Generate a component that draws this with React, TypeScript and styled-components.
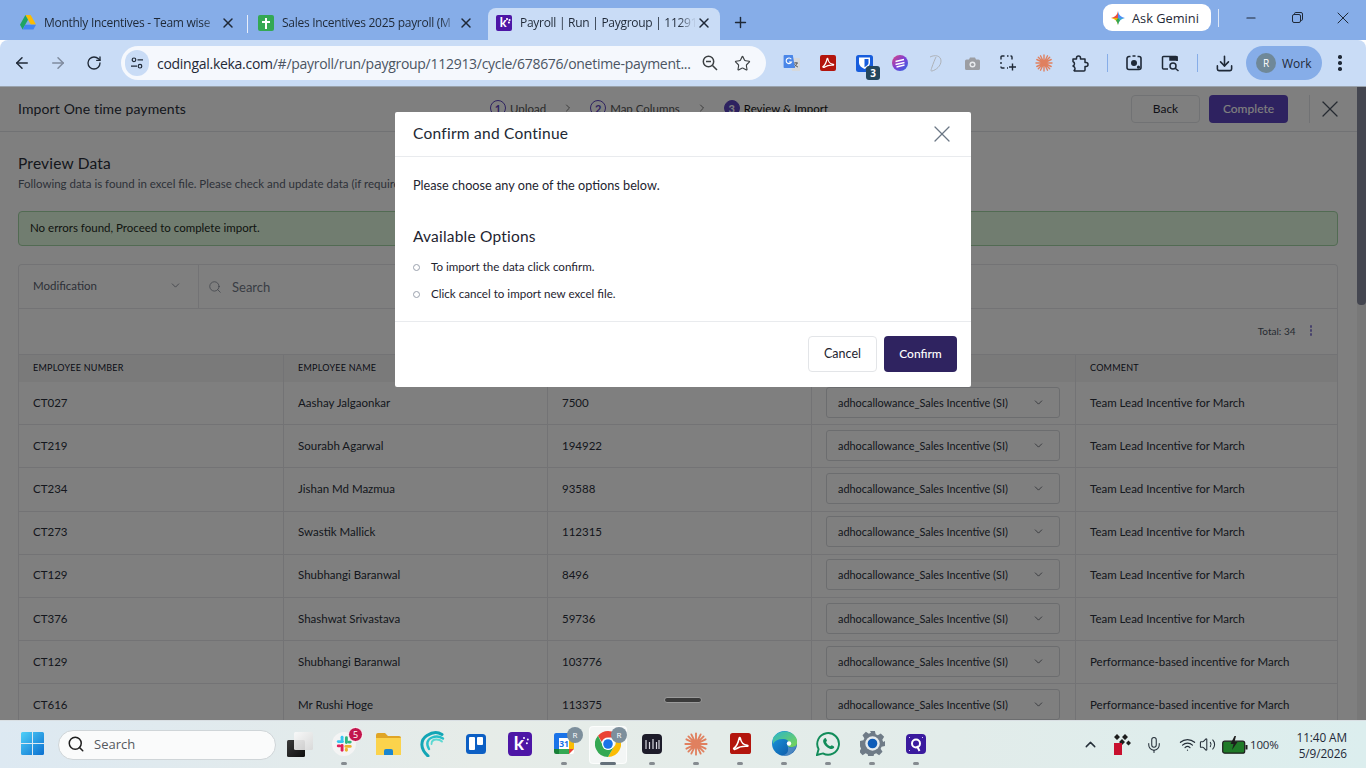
import { Fragment } from 'react';
import styled, { createGlobalStyle } from 'styled-components';
import {
  ArrowLeft,
  ArrowRight,
  RotateCw,
  Star,
  X,
  Plus,
  Minus,
  ChevronDown,
  ChevronRight,
  ChevronUp,
  Search,
  Mic,
  Wifi,
  Volume2,
  Download,
} from 'lucide-react';

const GlobalStyle = createGlobalStyle`
  html, body {
    margin: 0;
    padding: 0;
    overflow: hidden;
    background: #fff;
  }
  *, *::before, *::after { box-sizing: border-box; }
`;

const KEKA = `Lato, "Open Sans", sans-serif`;
const SYSTEM = `"Open Sans", "Noto Sans", sans-serif`;

type Row = { id: string; name: string; amount: string; comment: string };

const TEAM = 'Team Lead Incentive for March';
const PERF = 'Performance-based incentive for March';

const rows: Row[] = [
  { id: 'CT027', name: 'Aashay Jalgaonkar', amount: '7500', comment: TEAM },
  { id: 'CT219', name: 'Sourabh Agarwal', amount: '194922', comment: TEAM },
  { id: 'CT234', name: 'Jishan Md Mazmua', amount: '93588', comment: TEAM },
  { id: 'CT273', name: 'Swastik Mallick', amount: '112315', comment: TEAM },
  { id: 'CT129', name: 'Shubhangi Baranwal', amount: '8496', comment: TEAM },
  { id: 'CT376', name: 'Shashwat Srivastava', amount: '59736', comment: TEAM },
  { id: 'CT129', name: 'Shubhangi Baranwal', amount: '103776', comment: PERF },
  { id: 'CT616', name: 'Mr Rushi Hoge', amount: '113375', comment: PERF },
];

/* ---------- drawn icons ---------- */

const DriveIcon = () => (
  <svg width="16" height="15" viewBox="0 0 16 15">
    <path d="M5.4 0h5.2l5.4 9.6h-5.2z" fill="#fbbc04" />
    <path d="M5.4 0L0 9.8l2.6 4.6L8 4.8z" fill="#1fa463" />
    <path d="M5.3 9.8H16l-2.6 4.7H2.6z" fill="#4285f4" />
  </svg>
);

const SheetsIcon = () => (
  <svg width="16" height="16" viewBox="0 0 16 16">
    <rect width="16" height="16" rx="2" fill="#34a853" />
    <path d="M7 3h2v3h3v2H9v6H7V8H4V6h3z" fill="#fff" />
  </svg>
);

const GeminiIcon = () => (
  <svg width="14" height="14" viewBox="0 0 14 14">
    <path d="M7 0C6.400 3.800 4.400 6 0 7h7z" fill="#e8503f" />
    <path d="M7 0c.6 3.800 2.600 6 7 7H7z" fill="#4d8df5" />
    <path d="M14 7c-4.400 1-6.400 3.200-7 7V7z" fill="#3fa7d6" />
    <path d="M7 14c-.6-3.800-2.600-6-7-7h7z" fill="#f2b400" />
    <path d="M7 14c-.3-2-1-3.500-2-4.600L7 7l2 2.400C8 10.500 7.300 12 7 14z" fill="#34a853" />
  </svg>
);

const TuneIcon = () => (
  <svg width="14" height="14" viewBox="0 0 14 14" fill="none" stroke="#1f2937" strokeWidth="1.2">
    <circle cx="4" cy="3.800" r="1.800" />
    <path d="M7.500 3.800H13M1 10.200h6" />
    <circle cx="10" cy="10.200" r="1.800" />
  </svg>
);

const ZoomOutIcon = () => (
  <svg width="18" height="18" viewBox="0 0 18 18" fill="none" stroke="#3c4043" strokeWidth="1.500">
    <circle cx="7.500" cy="7.500" r="5.200" />
    <path d="M11.500 11.500L16 16M5 7.500h5" />
  </svg>
);

const TranslateIcon = () => (
  <svg width="18" height="18" viewBox="0 0 18 18">
    <path d="M8 4h8a1 1 0 0 1 1 1v12H9z" fill="#d5d8dc" />
    <path d="M11 9h4M13 8v1M14 9c-.4 2-1.500 3.200-3 4M11.500 10c.6 1.400 1.800 2.500 3.500 3" stroke="#555" strokeWidth="0.900" fill="none" />
    <path d="M1.500 1h8.300L12 14H1.500A.9.900 0 0 1 .6 13V2A1 1 0 0 1 1.500 1z" fill="#4a86e8" />
    <path d="M8.300 5.200A2.800 2.800 0 1 0 8.500 8H6" stroke="#fff" strokeWidth="1.100" fill="none" />
  </svg>
);

const PdfIcon = ({ size = 16 }: { size?: number }) => (
  <svg width={size} height={size} viewBox="0 0 16 16">
    <rect width="16" height="16" rx="2" fill="#b3150d" />
    <path
      d="M2.800 11.800c1.600-1 3.500-4.600 4.200-7.800.2-.8.800-.7.900 0 .4 2.600 2.300 5 5.300 5.300.7.100.6.900-.1.800-3-.2-6.400.5-8.300 1.900-1 .8-2 .5-2-.2z"
      fill="none"
      stroke="#fff"
      strokeWidth="1.200"
    />
  </svg>
);

const ShieldIcon = () => (
  <svg width="17" height="17" viewBox="0 0 17 17">
    <rect width="17" height="17" rx="2.500" fill="#175ddc" />
    <path d="M3 2.500h11v5.500c0 2.500-2.500 4.500-5.500 6C5.500 12.500 3 10.500 3 8z" fill="#fff" />
    <path d="M8.500 4H12.500v4c0 1.600-1.800 3-4 4.200z" fill="#175ddc" />
  </svg>
);

const SwirlIcon = () => (
  <svg width="16" height="16" viewBox="0 0 16 16">
    <defs>
      <linearGradient id="swirl" x1="0" y1="0" x2="1" y2="1">
        <stop offset="0" stopColor="#e0457b" />
        <stop offset="0.5" stopColor="#7c3fd6" />
        <stop offset="1" stopColor="#2c6be0" />
      </linearGradient>
    </defs>
    <circle cx="8" cy="8" r="8" fill="url(#swirl)" />
    <path d="M3.500 6.500L12 4.500M3.500 9.500L12.500 7.500M4.500 12L12.500 10" stroke="#fff" strokeWidth="1.300" />
  </svg>
);

const ScriptIcon = () => (
  <svg width="18" height="18" viewBox="0 0 18 18" fill="none" stroke="#aeb2b8" strokeWidth="1">
    <path d="M3 3c5-2.500 11-1.500 11 4 0 5-5 9-9 10-1.500.3-1-1 0-4 1-3 3-8 4-10" />
  </svg>
);

const CameraIcon = () => (
  <svg width="15" height="13" viewBox="0 0 15 13">
    <path d="M1.500 2.500H4L5 .5h5l1 2h2.500A1.500 1.500 0 0 1 15 4v7.500a1.500 1.500 0 0 1-1.500 1.500h-12A1.500 1.500 0 0 1 0 11.500V4a1.500 1.500 0 0 1 1.500-1.500z" fill="#9c9ea3" />
    <circle cx="7.500" cy="7.500" r="3" fill="#e9ebee" />
    <circle cx="7.500" cy="7.500" r="1.600" fill="#9c9ea3" />
  </svg>
);

const CaptureIcon = () => (
  <svg width="16" height="16" viewBox="0 0 16 16" fill="none" stroke="#1f2937" strokeWidth="1.400">
    <path d="M1 4.500V2a1 1 0 0 1 1-1h2.500M7 1h1.500M12 4.500V2a1 1 0 0 0-1-1h-.5M1 7v2M1 11.500V12a1 1 0 0 0 1 1h2.500M7 13h1M12.500 8.500v7M9 12h7" />
  </svg>
);

const ClaudeIcon = ({ size = 18 }: { size?: number }) => (
  <svg width={size} height={size} viewBox="0 0 18 18" stroke="#e0805f" strokeWidth="1.400" strokeLinecap="round">
    <path d="M9 1v16M1 9h16M3.300 3.300l11.400 11.400M14.700 3.300L3.300 14.700M5.500 1.800l7 14.400M12.500 1.800l-7 14.400M1.800 5.500l14.400 7M16.200 5.500l-14.400 7" />
    <circle cx="9" cy="9" r="2.400" fill="#e0805f" stroke="none" />
  </svg>
);

const ExtensionIcon = () => (
  <svg width="17" height="17" viewBox="0 0 17 17" fill="none" stroke="#1f2937" strokeWidth="1.500" strokeLinejoin="round">
    <path d="M1 4h3.500V3a2 2 0 0 1 4 0v1H13v3.500h1a2 2 0 0 1 0 4h-1V15a1 1 0 0 1-1 1H2.500l-.5-.5c1.500-1 1.500-3.500-1-4.500 2-1 2-3.500 0-4.500z" />
  </svg>
);

const LensIcon = () => (
  <svg width="18" height="18" viewBox="0 0 18 18" fill="none" stroke="#1f2937" strokeWidth="1.600">
    <path d="M5.500 2.500H4A2 2 0 0 0 2 4.500v9a2 2 0 0 0 2 2h10a2 2 0 0 0 2-2v-9a2 2 0 0 0-2-2h-1.500M7.500 2h3" />
    <circle cx="9" cy="9" r="2.200" fill="#1f2937" />
    <circle cx="13.500" cy="13.200" r="0.800" fill="#1f2937" />
  </svg>
);

const SidePanelIcon = () => (
  <svg width="19" height="18" viewBox="0 0 19 18" fill="none" stroke="#1f2937" strokeWidth="1.500">
    <path d="M7 15H2.500A1 1 0 0 1 1.500 14V3.500a1 1 0 0 1 1-1H15a1 1 0 0 1 1 1V7" />
    <path d="M9 3h7v3H9z" fill="#1f2937" />
    <circle cx="12" cy="12" r="3" />
    <path d="M14.200 14.200L17.500 17" />
  </svg>
);

const RestoreIcon = () => (
  <svg width="11" height="11" viewBox="0 0 11 11" fill="none" stroke="#1f2937" strokeWidth="1">
    <rect x="0.500" y="2.500" width="8" height="8" rx="1.500" />
    <path d="M2.500 1.800A1.300 1.300 0 0 1 3.800.5h5.200a1.500 1.500 0 0 1 1.500 1.500v5.200a1.300 1.300 0 0 1-1.300 1.300" />
  </svg>
);

const WindowsIcon = () => (
  <svg width="23" height="23" viewBox="0 0 23 23">
    <defs>
      <linearGradient id="win" x1="0" y1="0" x2="1" y2="1">
        <stop offset="0" stopColor="#4fd0f8" />
        <stop offset="1" stopColor="#0b6fd0" />
      </linearGradient>
    </defs>
    <path d="M0 1.500A1.500 1.500 0 0 1 1.500 0H11v11H0zM12 0h9.500A1.500 1.500 0 0 1 23 1.500V11H12zM0 12h11v11H1.500A1.500 1.500 0 0 1 0 21.500zM12 12h11v9.500a1.500 1.500 0 0 1-1.500 1.500H12z" fill="url(#win)" />
  </svg>
);

const TaskViewIcon = () => (
  <svg width="26" height="26" viewBox="0 0 26 26">
    <defs>
      <linearGradient id="tvBack" x1="0" y1="0" x2="1" y2="1">
        <stop offset="0" stopColor="#3a3a3a" />
        <stop offset="1" stopColor="#0f0f0f" />
      </linearGradient>
      <linearGradient id="tvFront" x1="0" y1="0" x2="1" y2="1">
        <stop offset="0" stopColor="#fafafa" />
        <stop offset="1" stopColor="#d8d8d8" />
      </linearGradient>
    </defs>
    <rect x="0" y="9" width="18" height="17" rx="1.500" fill="url(#tvBack)" />
    <rect x="7" y="1" width="19" height="18" rx="1.500" fill="url(#tvFront)" opacity="0.92" />
  </svg>
);

const SlackIcon = () => (
  <svg width="24" height="24" viewBox="0 0 25 25">
    <circle cx="12.500" cy="12.500" r="12.500" fill="#f4f4f4" />
    <g strokeWidth="3" strokeLinecap="round" fill="none">
      <path d="M6.500 10H11" stroke="#36c5f0" />
      <path d="M10.500 5.500V8" stroke="#36c5f0" />
      <path d="M15 6v5" stroke="#2eb67d" />
      <path d="M19 10.500h-1.500" stroke="#2eb67d" />
      <path d="M14.500 15H19" stroke="#ecb22e" />
      <path d="M15 19v-1" stroke="#ecb22e" />
      <path d="M10.500 14v5" stroke="#e01e5a" />
      <path d="M6.500 14.500H8" stroke="#e01e5a" />
    </g>
  </svg>
);

const FolderIcon = () => (
  <svg width="25" height="22" viewBox="0 0 25 22">
    <path d="M0 2a2 2 0 0 1 2-2h7l3 3h11a2 2 0 0 1 2 2v4H0z" fill="#e0a526" />
    <path d="M0 5h25v17H0z" fill="#fbd34c" />
    <path d="M8 18a2 2 0 0 1 2-2h5a2 2 0 0 1 2 2v4H8z" fill="#1a86d0" />
  </svg>
);

const WaveIcon = () => (
  <svg width="25" height="26" viewBox="0 0 25 26" fill="none" strokeLinecap="round">
    <path d="M8 25C0 18 0 9 7 4.500s11-3.500 15-1" stroke="#12a5b5" strokeWidth="3" />
    <path d="M9 18C6 13 7 8.500 12 6.500s8-1 11 1" stroke="#27bfc8" strokeWidth="2.400" />
    <path d="M11.500 13c0-3 2-4.500 5-4.500s4 .5 5.500 2" stroke="#5cd8d2" strokeWidth="1.800" />
  </svg>
);

const TrelloIcon = () => (
  <svg width="20" height="20" viewBox="0 0 20 20">
    <rect width="20" height="20" rx="3.500" fill="#0c5fc4" />
    <rect x="3" y="3" width="6" height="13" rx="1" fill="#fff" />
    <rect x="11" y="3" width="6" height="8" rx="1" fill="#fff" />
  </svg>
);

const CalendarIcon = () => (
  <svg width="20" height="21" viewBox="0 0 20 21">
    <rect width="20" height="21" rx="2" fill="#fff" />
    <path d="M2 0h13v5H5v11H0V2a2 2 0 0 1 2-2z" fill="#1a73e8" />
    <path d="M15 5h5v11h-5z" fill="#fbbc04" />
    <path d="M5 16h10v5H5z" fill="#34a853" />
    <path d="M0 16h5v5H2a2 2 0 0 1-2-2z" fill="#188038" />
    <path d="M15 16h5l-5 5z" fill="#ea4335" />
    <text x="10" y="14" textAnchor="middle" fontSize="8.500" fontWeight="700" fontFamily="'Open Sans', sans-serif" fill="#1a73e8">
      31
    </text>
  </svg>
);

const ChromeIcon = () => (
  <svg width="26" height="26" viewBox="0 0 26 26">
    <path d="M13 0a13 13 0 0 1 11.300 6.500H13a6.500 6.500 0 0 0-6.200 4.500L3 4.700A13 13 0 0 1 13 0z" fill="#ea4335" />
    <path d="M24.300 6.500A13 13 0 0 1 13 26l5.600-9.700a6.500 6.500 0 0 0 0-9.800z" fill="#fbbc04" />
    <path d="M13 26A13 13 0 0 1 3 4.700l5.600 11.600a6.500 6.500 0 0 0 10 0L13 26z" fill="#34a853" />
    <circle cx="13" cy="13" r="6" fill="#fff" />
    <circle cx="13" cy="13" r="4.800" fill="#1a73e8" />
  </svg>
);

const BarsIcon = () => (
  <svg width="20" height="20" viewBox="0 0 20 20">
    <rect width="20" height="20" rx="4" fill="#1d1c2a" />
    <path d="M4 6v9M7.500 8v7M11 5v10M14.500 8v7M17 6v9" stroke="#d8d8e0" strokeWidth="1.200" />
  </svg>
);

const EdgeIcon = () => (
  <svg width="25" height="25" viewBox="0 0 25 25">
    <defs>
      <linearGradient id="edgeA" x1="0" y1="0" x2="1" y2="1">
        <stop offset="0" stopColor="#2cb5c9" />
        <stop offset="1" stopColor="#7bd651" />
      </linearGradient>
      <linearGradient id="edgeB" x1="0" y1="0" x2="1" y2="1">
        <stop offset="0" stopColor="#1b9de2" />
        <stop offset="1" stopColor="#0c4f9e" />
      </linearGradient>
    </defs>
    <circle cx="12.500" cy="12.500" r="12.500" fill="url(#edgeB)" />
    <path d="M1 7C5 0 15-1.500 21 3c4 3 5 8 3.500 11-2 2.500-8 3-9 .5 3-1.500 1.500-6-3.500-6.500C7.500 7.500 3 9 1 13z" fill="url(#edgeA)" />
    <path d="M15.500 14.500c1 3 6 2.500 9-.5-1 6-6 11-12 11-1.500 0-3-.5-3.500-1 4 1 9-2 6.500-9.500z" fill="#ffffff" opacity="0.25" />
    <circle cx="17" cy="12.500" r="2.200" fill="#fff" />
  </svg>
);

const WhatsappIcon = () => (
  <svg width="24" height="24" viewBox="0 0 25 25">
    <path d="M1 24l1.700-6.200A11.300 11.300 0 1 1 7.200 22.300z" fill="none" stroke="#128c5a" strokeWidth="2" />
    <path d="M8.500 7c1-1 1.800-.8 2.200.2l.7 1.700c.1.500-.8 1.300-.9 1.800 1 2 2.300 3.300 4.200 4.200.6-.1 1.300-1.100 1.800-1l1.900.9c.8.500.8 1.200-.1 2.200-1.500 1.300-3.400 1-6-.6-2.400-1.500-4-3.500-4.700-5.600C7.300 9.200 7.500 8 8.500 7z" fill="#128c5a" />
  </svg>
);

const GearIcon = () => (
  <svg width="25" height="25" viewBox="0 0 26 26">
    <path d="M10.500 0h5l.8 3.500 2.200 1 3.100-1.900 3.500 3.500-1.900 3.100.9 2.200L26 10.500v5l-3.600.8-.9 2.200 1.900 3.100-3.500 3.500-3.100-1.900-2.200.9-.8 3.400h-5l-.8-3.400-2.200-.9-3.100 1.900-3.500-3.500 1.900-3.100-.9-2.200L0 15.500v-5l3.600-.8.900-2.200-1.900-3.100 3.500-3.500 3.100 1.900 2.200-1z" fill="#6f7b87" />
    <circle cx="13" cy="13" r="7.500" fill="#e6ebee" />
    <circle cx="13" cy="13" r="5" fill="#0f5cb8" />
  </svg>
);

const QuillIcon = () => (
  <svg width="20" height="20" viewBox="0 0 20 20">
    <rect width="20" height="20" rx="4" fill="#3a1a9e" />
    <circle cx="10" cy="9.500" r="4" fill="none" stroke="#fff" strokeWidth="2" />
    <path d="M11 12l2.500 5" stroke="#fff" strokeWidth="2" />
    <path d="M3 3l1 1M16 3l1 1M3 16l1 1" stroke="#e0c8ff" strokeWidth="1" />
  </svg>
);

const TrayDropIcon = () => (
  <svg width="17" height="21" viewBox="0 0 17 21">
    <path d="M0 3l3-3 3 3-3 3zM8 3l3-3 3 3-3 3zM5 8l3-3 3 3-3 3zM12 9l2.500-2.500L17 9l-2.500 2.500z" fill="#1d1d1d" />
    <rect x="0" y="9" width="8" height="12" fill="#c8102e" />
  </svg>
);

const BatteryIcon = () => (
  <svg width="26" height="18" viewBox="0 0 26 18">
    <rect x="0.700" y="5.200" width="22" height="12" rx="2" fill="#1f7a28" stroke="#1d1d1d" strokeWidth="1.200" />
    <rect x="23.500" y="9" width="2" height="4.500" fill="#1d1d1d" />
    <path d="M12.500 0L8.500 8h3l-1.500 6 5.500-8h-3l1.500-6z" fill="#1d1d1d" />
  </svg>
);

/* ---------- browser tabs ---------- */

const TabStrip = styled.div`
  height: 40px;
  background: #86ade8;
  display: flex;
  align-items: flex-end;
  padding-left: 12px;
  font-family: ${SYSTEM};
`;

const Tab = styled.div<{ $active?: boolean }>`
  width: 232px;
  height: 32px;
  display: flex;
  align-items: center;
  padding: 0 8px 3px;
  border-radius: 8px 8px 0 0;
  background: ${(p) => (p.$active ? '#c9dcf6' : 'transparent')};
  color: #1f2937;
`;

const TabFavicon = styled.span`
  width: 16px;
  height: 16px;
  flex: none;
  display: flex;
  align-items: center;
  justify-content: center;
  margin-right: 8px;
`;

const KekaTile = styled.span<{ $size: number }>`
  position: relative;
  width: ${(p) => p.$size}px;
  height: ${(p) => p.$size}px;
  flex: none;
  border-radius: ${(p) => (p.$size > 16 ? 4 : 2)}px;
  background: #4d16a6;
  color: #fff;
  display: flex;
  align-items: center;
  padding-left: ${(p) => p.$size * 0.24}px;
  padding-bottom: ${(p) => p.$size * 0.06}px;
  font: 700 ${(p) => p.$size * 0.8}px/1 ${KEKA};
  &::after {
    content: '';
    position: absolute;
    top: ${(p) => p.$size * 0.22}px;
    left: ${(p) => p.$size * 0.62}px;
    width: ${(p) => p.$size * 0.1}px;
    height: ${(p) => p.$size * 0.1}px;
    border-radius: 50%;
    background: #fff;
    box-shadow:
      ${(p) => p.$size * 0.16}px ${(p) => p.$size * 0.06}px 0 #fff,
      ${(p) => p.$size * 0.12}px ${(p) => p.$size * 0.22}px 0 #fff;
  }
`;

const TabTitle = styled.span`
  flex: 1;
  min-width: 0;
  font-size: 12px;
  letter-spacing: -0.28px;
  white-space: nowrap;
  overflow: hidden;
  mask-image: linear-gradient(90deg, #000 90%, transparent);
`;

const TabClose = styled.span`
  width: 16px;
  height: 16px;
  flex: none;
  display: flex;
  align-items: center;
  justify-content: center;
  color: #1f2937;
`;

const TabSeparator = styled.span<{ $hidden?: boolean }>`
  width: 1px;
  height: 18px;
  background: ${(p) => (p.$hidden ? 'transparent' : '#e8eefa')};
  margin: 0 2px 7px 3px;
`;

const NewTab = styled.span`
  width: 28px;
  height: 28px;
  margin: 0 0 4px 6px;
  display: flex;
  align-items: center;
  justify-content: center;
  color: #1f2937;
`;

const StripRight = styled.div`
  margin-left: auto;
  height: 40px;
  display: flex;
  align-items: center;
`;

const GeminiPill = styled.div`
  width: 108px;
  height: 27px;
  margin-top: -5px;
  border-radius: 9px;
  background: #fff;
  display: flex;
  align-items: center;
  gap: 7px;
  padding-left: 8px;
  font-size: 12.800px;
  font-weight: 500;
  color: #1f2937;
`;

const StripDivider = styled.span`
  width: 1px;
  height: 18px;
  margin: -5px 9px 0 7px;
  background: #dce7f8;
`;

const WindowButton = styled.span`
  width: 46px;
  height: 32px;
  margin-top: -5px;
  display: flex;
  align-items: center;
  justify-content: center;
  color: #1f2937;
`;

/* ---------- browser toolbar ---------- */

const Toolbar = styled.div`
  height: 47px;
  background: #c9dcf6;
  border-bottom: 1px solid #9aa3ad;
  border-radius: 8px 8px 0 0;
  display: flex;
  align-items: center;
  padding-left: 4px;
  font-family: ${SYSTEM};
`;

const ToolButton = styled.span<{ $dim?: boolean }>`
  position: relative;
  width: 36px;
  height: 34px;
  flex: none;
  display: flex;
  align-items: center;
  justify-content: center;
  color: ${(p) => (p.$dim ? '#7f8b9e' : '#1f2937')};
`;

const Omnibox = styled.div`
  width: 645px;
  height: 34px;
  margin: 0 8px 0 9px;
  border-radius: 17px;
  background: #f5f8fd;
  display: flex;
  align-items: center;
  padding: 0 6px 0 4px;
  font-size: 14px;
  letter-spacing: -0.28px;
`;

const SiteChip = styled.span`
  width: 24px;
  height: 26px;
  border-radius: 13px;
  background: #c9dcf6;
  display: flex;
  align-items: center;
  justify-content: center;
  margin-right: 8px;
`;

const UrlText = styled.span`
  width: 537px;
  white-space: nowrap;
  color: #4b5563;
`;

const UrlHost = styled.span`
  color: #1f2937;
`;

const OmniAction = styled.span`
  width: 32px;
  flex: none;
  display: flex;
  justify-content: center;
  color: #3c4043;
`;

const ExtBadge = styled.span`
  position: absolute;
  right: 2px;
  bottom: 0;
  width: 14px;
  height: 14px;
  border-radius: 3px;
  background: #24475d;
  color: #fff;
  font: 700 10px/14px ${SYSTEM};
  text-align: center;
`;

const ToolDivider = styled.span`
  width: 1px;
  height: 18px;
  flex: none;
  margin: 0 8.500px;
  background: #86ade8;
`;

const ProfilePill = styled.div`
  width: 76px;
  height: 34px;
  flex: none;
  margin-left: 4px;
  border-radius: 17px;
  background: #86ade8;
  display: flex;
  align-items: center;
  gap: 6px;
  padding-left: 10px;
  font-size: 12px;
  color: #1f2937;
`;

const Avatar = styled.span`
  width: 20px;
  height: 20px;
  border-radius: 50%;
  background: #6f8898;
  color: #fff;
  font-size: 10px;
  display: flex;
  align-items: center;
  justify-content: center;
`;

const Kebab = styled.span<{ $color: string; $dot: number; $gap: number }>`
  display: flex;
  flex-direction: column;
  gap: ${(p) => p.$gap}px;
  & > i {
    display: block;
    width: ${(p) => p.$dot}px;
    height: ${(p) => p.$dot}px;
    border-radius: 50%;
    background: ${(p) => p.$color};
  }
`;

/* ---------- keka page ---------- */

const Viewport = styled.div`
  position: relative;
  height: 633px;
  overflow: hidden;
  display: flex;
  background: #fff;
  font-family: ${KEKA};
  color: #2a2f3a;
`;

const PageColumn = styled.div`
  width: 1357px;
  flex: none;
`;

const ScrollTrack = styled.div`
  width: 9px;
  flex: none;
  background: #f1f1f1;
`;

const ScrollThumb = styled.div`
  width: 100%;
  height: 218px;
  border-radius: 0 0 4px 4px;
  background: #888ca0;
`;

const PageHeader = styled.header`
  height: 45px;
  display: flex;
  align-items: center;
  padding-left: 18px;
  border-bottom: 1px solid #e3e5e8;
`;

const PageTitle = styled.h1`
  width: 472px;
  flex: none;
  margin: -2px 0 0;
  font-size: 14px;
  font-weight: 400;
  letter-spacing: 0.12px;
`;

const Stepper = styled.div`
  display: flex;
  align-items: center;
  margin-top: -2px;
  font-size: 11.500px;
`;

const StepDot = styled.span<{ $current?: boolean }>`
  width: 16px;
  height: 16px;
  border-radius: 50%;
  border: 1px solid #5c44c0;
  background: ${(p) => (p.$current ? '#5c44c0' : 'transparent')};
  color: ${(p) => (p.$current ? '#fff' : '#5c44c0')};
  display: flex;
  align-items: center;
  justify-content: center;
  font-size: 11px;
  font-weight: 700;
  margin-right: 4px;
`;

const StepLabel = styled.span<{ $current?: boolean }>`
  color: ${(p) => (p.$current ? '#111' : '#555')};
  white-space: nowrap;
`;

const StepArrow = styled.span`
  width: 44px;
  display: flex;
  justify-content: center;
  color: #777;
`;

const HeaderActions = styled.div`
  margin-left: auto;
  display: flex;
  align-items: center;
  gap: 9px;
`;

const GhostButton = styled.button<{ $w: number; $h: number; $fs: number }>`
  width: ${(p) => p.$w}px;
  height: ${(p) => p.$h}px;
  padding: 0 0 1px;
  border: 1px solid #e3e5e8;
  border-radius: 4px;
  background: #fff;
  color: #1e2430;
  font: 400 ${(p) => p.$fs}px ${KEKA};
`;

const PrimaryButton = styled.button<{ $w: number; $h: number; $bg: string }>`
  width: ${(p) => p.$w}px;
  height: ${(p) => p.$h}px;
  padding: 0 0 1px;
  border: 0;
  border-radius: 4px;
  background: ${(p) => p.$bg};
  color: #fff;
  font: 500 12px ${KEKA};
`;

const HeaderDivider = styled.span`
  width: 1px;
  height: 28px;
  margin: 0 0 0 12px;
  background: #e3e5e8;
`;

const HeaderClose = styled.span`
  width: 28px;
  margin: 0 13px 0 -3px;
  display: flex;
  justify-content: center;
  color: #4b5563;
`;

const Content = styled.main`
  padding: 21px 18px 0;
`;

const SectionTitle = styled.h2`
  margin: 0;
  font-size: 15.500px;
  line-height: 20px;
  font-weight: 400;
  letter-spacing: 0.2px;
`;

const SectionHint = styled.p`
  margin: 3px 0 0;
  font-size: 11.500px;
  line-height: 16px;
  color: #5b6472;
  white-space: nowrap;
`;

const SuccessAlert = styled.div`
  height: 35px;
  margin: 19px 1px 0 0;
  padding: 0 0 3px 11px;
  display: flex;
  align-items: center;
  border: 1px solid #a5d6a7;
  border-radius: 4px;
  background: #e3fae0;
  font-size: 11.500px;
  color: #1e2b1e;
`;

const TableCard = styled.section`
  margin: 18px 1px 0 0;
  border: 1px solid #e6e7ea;
  border-bottom: 0;
  border-radius: 4px 4px 0 0;
`;

const FilterRow = styled.div`
  height: 44px;
  display: flex;
  align-items: center;
  border-bottom: 1px solid #e6e7ea;
`;

const FilterSelect = styled.div`
  width: 180px;
  height: 100%;
  display: flex;
  align-items: center;
  justify-content: space-between;
  padding: 0 16px 2px 14px;
  border-right: 1px solid #e6e7ea;
  font-size: 11.500px;
  color: #5a5f70;
`;

const SearchField = styled.div`
  display: flex;
  align-items: center;
  gap: 10px;
  padding-left: 9px;
  font-size: 13px;
  color: #737a88;
`;

const TotalRow = styled.div`
  height: 45px;
  display: flex;
  align-items: center;
  justify-content: flex-end;
  gap: 14px;
  padding: 0 25px 2px 0;
  font-size: 10px;
  color: #4b5563;
`;

const TableGrid = styled.div`
  display: grid;
  grid-template-columns: 264px 264px 264px 264px 1fr;
  grid-auto-rows: 43.2px;
`;

const HeadRow = styled(TableGrid)`
  grid-auto-rows: 27px;
  background: #f4f4f4;
  border-top: 1px solid #e6e7ea;
`;

const HeadCell = styled.div`
  display: flex;
  align-items: center;
  padding: 0 0 3px 14px;
  border-left: 1px solid #e6e7ea;
  font-size: 9px;
  letter-spacing: 0.25px;
  color: #16202e;
  &:first-child {
    border-left: 0;
  }
`;

const Cell = styled.div`
  display: flex;
  align-items: center;
  padding: 0 0 2px 14px;
  border-left: 1px solid #e6e7ea;
  border-bottom: 1px solid #e6e7ea;
  font-size: 11.500px;
  white-space: nowrap;
  &:nth-child(5n + 1) {
    border-left: 0;
  }
`;

const PaySelect = styled.div`
  width: 234px;
  height: 31px;
  display: flex;
  align-items: center;
  justify-content: space-between;
  padding: 0 14px 0 11px;
  border: 1px solid #d8dade;
  border-radius: 3px;
  font-size: 10.900px;
`;

/* ---------- dialog ---------- */

const Backdrop = styled.div`
  position: absolute;
  inset: 0;
  background: rgba(0, 0, 0, 0.5);
`;

const Dialog = styled.div`
  position: absolute;
  top: 25px;
  left: 395px;
  width: 576px;
  height: 275px;
  border-radius: 2px;
  background: #fff;
  color: #1e2430;
`;

const DialogHead = styled.div`
  height: 45px;
  padding: 0 15px 0 18px;
  display: flex;
  align-items: center;
  justify-content: space-between;
  border-bottom: 1px solid #e9ebee;
  font-size: 15.500px;
  letter-spacing: 0.25px;
  color: #222833;
`;

const DialogTitle = styled.span`
  margin-top: -2px;
`;

const DialogClose = styled.span`
  display: flex;
  color: #6b7785;
`;

const DialogBody = styled.div`
  height: 165px;
  padding: 20px 18px 0;
  border-bottom: 1px solid #e9ebee;
`;

const DialogLead = styled.p`
  margin: 0;
  font-size: 12.700px;
  line-height: 16px;
`;

const OptionsTitle = styled.h3`
  margin: 33px 0 0;
  font-size: 15.500px;
  line-height: 20px;
  font-weight: 400;
  letter-spacing: 0.2px;
`;

const OptionList = styled.ul`
  margin: 12px 0 0;
  padding: 0;
  list-style: none;
  display: flex;
  flex-direction: column;
  gap: 11px;
`;

const OptionItem = styled.li`
  height: 16px;
  display: flex;
  align-items: center;
  gap: 11px;
  font-size: 11.600px;
  &::before {
    content: '';
    width: 7px;
    height: 7px;
    margin-top: 2px;
    border: 1px solid #9aa1ad;
    border-radius: 50%;
  }
`;

const DialogFoot = styled.div`
  height: 65px;
  padding: 0 14px 2px 0;
  display: flex;
  align-items: center;
  justify-content: flex-end;
  gap: 7px;
`;

const ScrollHandle = styled.div`
  position: absolute;
  top: 610px;
  left: 664px;
  width: 38px;
  height: 6px;
  border-radius: 3px;
  background: #3a3a3a;
  border: 1px solid #9a9a9a;
`;

/* ---------- taskbar ---------- */

const Taskbar = styled.footer`
  height: 48px;
  display: flex;
  align-items: center;
  padding-left: 10px;
  background: linear-gradient(90deg, #dde9f2 0%, #e6ece8 35%, #e2ecea 70%, #dceeee 100%);
  border-top: 1px solid #d9dfe3;
  font-family: ${SYSTEM};
  color: #1f2937;
`;

const TaskSlot = styled.div<{ $active?: boolean }>`
  position: relative;
  width: 44px;
  height: 46px;
  flex: none;
  display: flex;
  align-items: center;
  justify-content: center;
  padding-bottom: 2px;
  &::before {
    content: '';
    display: ${(p) => (p.$active ? 'block' : 'none')};
    position: absolute;
    inset: 4px 3px 4px 3px;
    border-radius: 4px;
    background: rgba(255, 255, 255, 0.55);
    border: 1px solid rgba(255, 255, 255, 0.7);
  }
  & > * {
    position: relative;
  }
`;

const TaskSearch = styled.div`
  width: 218px;
  height: 30px;
  flex: none;
  margin: 0 2px 0 4px;
  padding: 0 0 1px 8px;
  border-radius: 15px;
  border: 1px solid #cfd5d8;
  background: #fafbfb;
  display: flex;
  align-items: center;
  gap: 9px;
  font-size: 13px;
  color: #55595e;
`;

const RunDot = styled.span<{ $wide?: boolean }>`
  position: absolute !important;
  left: 50%;
  bottom: 3px;
  width: ${(p) => (p.$wide ? 16 : 6)}px;
  height: 3px;
  transform: translateX(-50%);
  border-radius: 2px;
  background: ${(p) => (p.$wide ? '#64707a' : '#858b90')};
`;

const CountBadge = styled.span`
  position: absolute !important;
  top: 5px;
  right: 3px;
  width: 15px;
  height: 15px;
  border-radius: 50%;
  border: 1px solid #fff;
  background: #c2164d;
  color: #fff;
  font-size: 9px;
  line-height: 13px;
  text-align: center;
`;

const UserBadge = styled.span`
  position: absolute !important;
  top: 5px;
  right: 3px;
  width: 16px;
  height: 16px;
  border-radius: 50%;
  background: #7d8f9c;
  color: #fff;
  font-size: 8px;
  line-height: 16px;
  text-align: center;
`;

const Tray = styled.div`
  margin-left: auto;
  height: 100%;
  display: flex;
  align-items: center;
  padding-right: 19px;
`;

const TraySlot = styled.span<{ $w: number }>`
  width: ${(p) => p.$w}px;
  flex: none;
  display: flex;
  justify-content: center;
  color: #26303a;
`;

const BatteryText = styled.span`
  width: 30px;
  margin: 0 15px 0 2px;
  font-size: 11.500px;
  letter-spacing: -0.2px;
`;

const Clock = styled.div`
  width: 52px;
  text-align: right;
  font-size: 11.800px;
  line-height: 16px;
  letter-spacing: -0.1px;
`;

const Shell = styled.div`
  width: 1366px;
  height: 768px;
  overflow: hidden;
  display: flex;
  flex-direction: column;
`;

const Dots = ({ color, dot, gap }: { color: string; dot: number; gap: number }) => (
  <Kebab $color={color} $dot={dot} $gap={gap}>
    <i />
    <i />
    <i />
  </Kebab>
);

const App = () => {
  return (
    <Shell>
      <GlobalStyle />
      <TabStrip>
        <Tab>
          <TabFavicon>
            <DriveIcon />
          </TabFavicon>
          <TabTitle>Monthly Incentives - Team wise</TabTitle>
          <TabClose>
            <X size={16} strokeWidth={2.2} />
          </TabClose>
        </Tab>
        <TabSeparator />
        <Tab>
          <TabFavicon>
            <SheetsIcon />
          </TabFavicon>
          <TabTitle>Sales Incentives 2025 payroll (M</TabTitle>
          <TabClose>
            <X size={16} strokeWidth={2.2} />
          </TabClose>
        </Tab>
        <TabSeparator $hidden />
        <Tab $active>
          <TabFavicon>
            <KekaTile $size={16}>k</KekaTile>
          </TabFavicon>
          <TabTitle>Payroll | Run | Paygroup | 11291</TabTitle>
          <TabClose>
            <X size={16} strokeWidth={2.2} />
          </TabClose>
        </Tab>
        <NewTab>
          <Plus size={17} strokeWidth={2} />
        </NewTab>
        <StripRight>
          <GeminiPill>
            <GeminiIcon />
            Ask Gemini
          </GeminiPill>
          <StripDivider />
          <WindowButton>
            <Minus size={14} strokeWidth={1.8} />
          </WindowButton>
          <WindowButton>
            <RestoreIcon />
          </WindowButton>
          <WindowButton>
            <X size={20} strokeWidth={1.2} />
          </WindowButton>
        </StripRight>
      </TabStrip>

      <Toolbar>
        <ToolButton>
          <ArrowLeft size={18} strokeWidth={2} />
        </ToolButton>
        <ToolButton $dim>
          <ArrowRight size={18} strokeWidth={2} />
        </ToolButton>
        <ToolButton>
          <RotateCw size={16} strokeWidth={2} />
        </ToolButton>
        <Omnibox>
          <SiteChip>
            <TuneIcon />
          </SiteChip>
          <UrlText>
            <UrlHost>codingal.keka.com</UrlHost>/#/payroll/run/paygroup/112913/cycle/678676/onetime-payment...
          </UrlText>
          <OmniAction>
            <ZoomOutIcon />
          </OmniAction>
          <OmniAction>
            <Star size={17} strokeWidth={1.6} />
          </OmniAction>
        </Omnibox>
        <ToolButton>
          <TranslateIcon />
        </ToolButton>
        <ToolButton>
          <PdfIcon />
        </ToolButton>
        <ToolButton>
          <ShieldIcon />
          <ExtBadge>3</ExtBadge>
        </ToolButton>
        <ToolButton>
          <SwirlIcon />
        </ToolButton>
        <ToolButton>
          <ScriptIcon />
        </ToolButton>
        <ToolButton>
          <CameraIcon />
        </ToolButton>
        <ToolButton>
          <CaptureIcon />
        </ToolButton>
        <ToolButton>
          <ClaudeIcon />
        </ToolButton>
        <ToolButton>
          <ExtensionIcon />
        </ToolButton>
        <ToolDivider />
        <ToolButton>
          <LensIcon />
        </ToolButton>
        <ToolButton>
          <SidePanelIcon />
        </ToolButton>
        <ToolDivider />
        <ToolButton>
          <Download size={19} strokeWidth={2} />
        </ToolButton>
        <ProfilePill>
          <Avatar>R</Avatar>
          Work
        </ProfilePill>
        <ToolButton>
          <Dots color="#1f2937" dot={3.5} gap={2.5} />
        </ToolButton>
      </Toolbar>

      <Viewport>
        <PageColumn>
          <PageHeader>
            <PageTitle>Import One time payments</PageTitle>
            <Stepper>
              <StepDot>1</StepDot>
              <StepLabel>Upload</StepLabel>
              <StepArrow>
                <ChevronRight size={12} />
              </StepArrow>
              <StepDot>2</StepDot>
              <StepLabel>Map Columns</StepLabel>
              <StepArrow>
                <ChevronRight size={12} />
              </StepArrow>
              <StepDot $current>3</StepDot>
              <StepLabel $current>Review &amp; Import</StepLabel>
            </Stepper>
            <HeaderActions>
              <GhostButton $w={69} $h={28} $fs={12}>
                Back
              </GhostButton>
              <PrimaryButton $w={79} $h={28} $bg="#5c44c0">
                Complete
              </PrimaryButton>
              <HeaderDivider />
              <HeaderClose>
                <X size={28} strokeWidth={1.1} />
              </HeaderClose>
            </HeaderActions>
          </PageHeader>

          <Content>
            <SectionTitle>Preview Data</SectionTitle>
            <SectionHint>Following data is found in excel file. Please check and update data (if required).</SectionHint>
            <SuccessAlert>No errors found, Proceed to complete import.</SuccessAlert>

            <TableCard>
              <FilterRow>
                <FilterSelect>
                  Modification
                  <ChevronDown size={13} strokeWidth={1.2} />
                </FilterSelect>
                <SearchField>
                  <Search size={14} strokeWidth={1.2} />
                  Search
                </SearchField>
              </FilterRow>
              <TotalRow>
                Total: 34
                <Dots color="#8f85d8" dot={2.5} gap={1.5} />
              </TotalRow>
              <HeadRow>
                <HeadCell>EMPLOYEE NUMBER</HeadCell>
                <HeadCell>EMPLOYEE NAME</HeadCell>
                <HeadCell />
                <HeadCell />
                <HeadCell>COMMENT</HeadCell>
              </HeadRow>
              <TableGrid>
                {rows.map((r) => (
                  <Fragment key={r.id + r.amount}>
                    <Cell>{r.id}</Cell>
                    <Cell>{r.name}</Cell>
                    <Cell>{r.amount}</Cell>
                    <Cell>
                      <PaySelect>
                        adhocallowance_Sales Incentive (SI)
                        <ChevronDown size={13} strokeWidth={1.2} />
                      </PaySelect>
                    </Cell>
                    <Cell>{r.comment}</Cell>
                  </Fragment>
                ))}
              </TableGrid>
            </TableCard>
          </Content>
        </PageColumn>
        <ScrollTrack>
          <ScrollThumb />
        </ScrollTrack>

        <Backdrop />
        <ScrollHandle />
        <Dialog>
          <DialogHead>
            <DialogTitle>Confirm and Continue</DialogTitle>
            <DialogClose>
              <X size={28} strokeWidth={1.1} />
            </DialogClose>
          </DialogHead>
          <DialogBody>
            <DialogLead>Please choose any one of the options below.</DialogLead>
            <OptionsTitle>Available Options</OptionsTitle>
            <OptionList>
              <OptionItem>To import the data click confirm.</OptionItem>
              <OptionItem>Click cancel to import new excel file.</OptionItem>
            </OptionList>
          </DialogBody>
          <DialogFoot>
            <GhostButton $w={69} $h={36} $fs={12.5}>
              Cancel
            </GhostButton>
            <PrimaryButton $w={73} $h={36} $bg="#2f2360">
              Confirm
            </PrimaryButton>
          </DialogFoot>
        </Dialog>
      </Viewport>

      <Taskbar>
        <TaskSlot>
          <WindowsIcon />
        </TaskSlot>
        <TaskSearch>
          <Search size={18} strokeWidth={2} color="#1f1f1f" />
          Search
        </TaskSearch>
        <TaskSlot>
          <TaskViewIcon />
        </TaskSlot>
        <TaskSlot>
          <SlackIcon />
          <CountBadge>5</CountBadge>
          <RunDot />
        </TaskSlot>
        <TaskSlot>
          <FolderIcon />
        </TaskSlot>
        <TaskSlot>
          <WaveIcon />
        </TaskSlot>
        <TaskSlot>
          <TrelloIcon />
        </TaskSlot>
        <TaskSlot>
          <KekaTile $size={24}>k</KekaTile>
        </TaskSlot>
        <TaskSlot>
          <CalendarIcon />
          <UserBadge>R</UserBadge>
          <RunDot />
        </TaskSlot>
        <TaskSlot $active>
          <ChromeIcon />
          <UserBadge>R</UserBadge>
          <RunDot $wide />
        </TaskSlot>
        <TaskSlot>
          <BarsIcon />
          <RunDot />
        </TaskSlot>
        <TaskSlot>
          <ClaudeIcon size={24} />
          <RunDot />
        </TaskSlot>
        <TaskSlot>
          <PdfIcon size={21} />
          <RunDot />
        </TaskSlot>
        <TaskSlot>
          <EdgeIcon />
          <RunDot />
        </TaskSlot>
        <TaskSlot>
          <WhatsappIcon />
          <RunDot />
        </TaskSlot>
        <TaskSlot>
          <GearIcon />
          <RunDot />
        </TaskSlot>
        <TaskSlot>
          <QuillIcon />
          <RunDot />
        </TaskSlot>
        <Tray>
          <TraySlot $w={32}>
            <ChevronUp size={17} strokeWidth={2} />
          </TraySlot>
          <TraySlot $w={32}>
            <TrayDropIcon />
          </TraySlot>
          <TraySlot $w={32}>
            <Mic size={18} strokeWidth={1.4} />
          </TraySlot>
          <TraySlot $w={7} />
          <TraySlot $w={20}>
            <Wifi size={17} strokeWidth={1.7} />
          </TraySlot>
          <TraySlot $w={20}>
            <Volume2 size={17} strokeWidth={1.5} />
          </TraySlot>
          <TraySlot $w={5} />
          <TraySlot $w={26}>
            <BatteryIcon />
          </TraySlot>
          <BatteryText>100%</BatteryText>
          <Clock>
            11:40 AM
            <br />
            5/9/2026
          </Clock>
        </Tray>
      </Taskbar>
    </Shell>
  );
};

export default App;
